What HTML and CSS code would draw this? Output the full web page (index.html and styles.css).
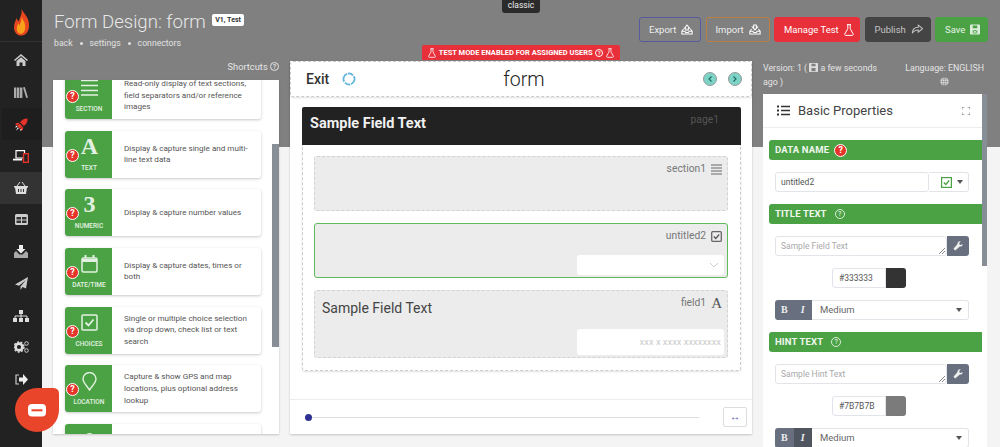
FILE: index.html
```html
<!DOCTYPE html>
<html lang="en">
<head>
<meta charset="utf-8">
<title>Form Design</title>
<link rel="stylesheet" href="styles.css">
</head>
<body>
<div class="app">
  <nav class="sidebar">
    <div class="logo">
      <svg width="15" height="28" viewBox="0 0 16 29"><path d="M8 0c1 3 3 5 5 8 2 3 3 6 3 10 0 6-3 11-8 11S0 25 0 20c0-4 2-7 3-10 0 2 1 3 2 4 1-4 4-8 3-14z" fill="#e8471f"/><path d="M8 9c1 3 4 6 4 11 0 4-2 7-5 7s-4-3-4-6c0-2 1-4 2-5 0 1 1 2 1 2 1-2 2-5 2-9z" fill="#f9a11b"/></svg>
    </div>
    <a class="nav-item"><svg width="14" height="12" viewBox="0 0 14 12"><path d="M7 0l7 6-1 1-6-5-6 5-1-1z" fill="#ccc"/><path d="M2.500 7L7 3.200 11.500 7v5H8.500V8.500h-3V12H2.500z" fill="#ccc"/></svg></a>
    <a class="nav-item"><svg width="14" height="11" viewBox="0 0 14 11"><path d="M0 .5h2.400V11H0zM3 .5h2.400V11H3zM6 .5h2.400V11H6zM9 .5l1.800-.500L14 10.500l-1.800.500z" fill="#aaa"/></svg></a>
    <a class="nav-item nav-dark"><svg width="13" height="13" viewBox="0 0 13 13"><path d="M12.500.5c.3 3-1 5.500-3.700 7.500L5 4.200C7 1.500 9.500.2 12.500.5z" fill="#e5332a"/><path d="M4.500 4.700L1.500 5 0 7h3zM8.300 8.500L8 11.500 6 13v-3z" fill="#e5332a"/><path d="M4.500 5.500L7.500 8.500 5 11 2 8z" fill="#e5332a"/><path d="M2.800 9.300l1 1L1 12.800z" fill="#fff"/><path d="M1.500 7.500L0 9.500l2.500-.5zM5.500 11l-.5 2 2-1.500z" fill="#fff"/></svg></a>
    <a class="nav-item"><svg width="16" height="13" viewBox="0 0 16 13"><path d="M3 .7h8.500V8H3z" fill="none" stroke="#fff" stroke-width="1.200"/><path d="M0 9.600h9" stroke="#fff" stroke-width="1.800"/><rect x="10.500" y="3.700" width="4.800" height="8.600" fill="#222" stroke="#e5332a" stroke-width="1.400"/></svg></a>
    <a class="nav-item nav-light"><svg width="14" height="12" viewBox="0 0 14 12"><path d="M3 4l3-4M11 4L8 0" stroke="#ddd" fill="none"/><path d="M0 4h14v1.500h-1L12 12H2L1 5.500H0z" fill="#ddd"/><path d="M4.500 7v3M7 7v3M9.500 7v3" stroke="#333"/></svg></a>
    <a class="nav-item"><svg width="13" height="11" viewBox="0 0 13 11"><path d="M0 1.500A1.500 1.500 0 0 1 1.500 0h10A1.500 1.500 0 0 1 13 1.500v8a1.500 1.500 0 0 1-1.500 1.500h-10A1.500 1.500 0 0 1 0 9.500z" fill="#ccc"/><path d="M1.500 3h4.500v2.500H1.500zM7 3h4.500v2.500H7zM1.500 6.500h4.500V9H1.500zM7 6.500h4.500V9H7z" fill="#333"/></svg></a>
    <a class="nav-item"><svg width="14" height="13" viewBox="0 0 14 13"><path d="M5 0h4v4h2.500L7 8.500 2.500 4H5z" fill="#eee"/><path d="M0 8l2-2 3.500 3.500h3L12 6l2 2v5H0z" fill="#aaa"/></svg></a>
    <a class="nav-item"><svg width="13" height="13" viewBox="0 0 13 13"><path d="M13 0L11 11.500 7.500 10 5.500 13V9.500L11 3 4 8.800 0 7.500z" fill="#ccc"/></svg></a>
    <a class="nav-item"><svg width="16" height="12" viewBox="0 0 16 12"><path d="M6 0h4v4H6zM0 8h4v4H0zM6 8h4v4H6zM12 8h4v4h-4z" fill="#ddd"/><path d="M8 4v2M2 8V6h12v2M8 6v2" stroke="#ddd" fill="none"/></svg></a>
    <a class="nav-item"><svg width="15" height="12" viewBox="0 0 15 12"><circle cx="5" cy="6" r="3.400" fill="none" stroke="#ddd" stroke-width="2.600"/><circle cx="5" cy="6" r="5" fill="none" stroke="#ddd" stroke-width="1.400" stroke-dasharray="2 1.500"/><circle cx="12.500" cy="2.500" r="1.800" fill="none" stroke="#ccc"/><circle cx="12.500" cy="9.500" r="1.800" fill="none" stroke="#ccc"/></svg></a>
    <a class="nav-item"><svg width="13" height="11" viewBox="0 0 13 11"><path d="M4 1H1v9h3" fill="none" stroke="#ccc" stroke-width="1.200"/><path d="M8 0l5 5.500L8 11V7.500H4v-4h4z" fill="#eee"/></svg></a>
  </nav>

  <main class="main">
    <header class="top">
      <div class="title-block">
        <h1 class="title">Form Design: form <span class="version-tag">V1, Test</span></h1>
        <p class="crumbs">back<i class="dot"></i>settings<i class="dot"></i>connectors</p>
      </div>
      <div class="actions">
        <button class="btn btn-export">Export <svg class="ico-tray" viewBox="0 0 14 12"><path d="M7 .8L10 4.500H8.500v2h-3v-2H4zM1 8l2-2.500M13 8l-2-2.500M1 8h3.500l1 1.500h3L9.500 8H13v3.200H1z" fill="none" stroke="#fff" stroke-width="1.200"/></svg></button>
        <button class="btn btn-import">Import <svg class="ico-tray" viewBox="0 0 14 12"><path d="M7 6.500L4 3h1.500V.8h3V3H10zM1 8l2-2.500M13 8l-2-2.500M1 8h3.500l1 1.500h3L9.500 8H13v3.200H1z" fill="none" stroke="#fff" stroke-width="1.200"/></svg></button>
        <button class="btn btn-test">Manage Test <svg class="ico-flask" viewBox="0 0 10 12"><path d="M3 .6h4M3.800.6v4L.8 10c-.3.700 0 1.400.8 1.400h6.800c.8 0 1.100-.7.800-1.400l-3-5.400v-4" fill="none" stroke="#fff"/></svg></button>
        <button class="btn btn-publish">Publish <svg class="ico-tray" viewBox="0 0 14 12"><path d="M8.500 1l5 4-5 4V6.500C5 6.500 3 7.500 1.500 10.500 1.500 6 4 3.500 8.500 3.500z" fill="none" stroke="#c4c4c4" stroke-width="1.200"/></svg></button>
        <button class="btn btn-save">Save <svg class="ico-save" viewBox="0 0 11 11"><rect width="11" height="11" rx="1" fill="#dceedb"/><path d="M3 1h5v3H3zM3 6h5v4H3z" fill="#4ba245"/><path d="M3.500 6.500l4 3M7.500 6.500l-4 3" stroke="#dceedb"/></svg></button>
      </div>
    </header>

    <div class="columns">
      <section class="col-left">
        <div class="shortcuts">Shortcuts <span class="help help-light">?</span></div>
        <div class="palette">
          <div class="cards">
            <div class="card">
              <div class="card-tile">
                <span class="tile-icon"><svg width="17" height="17" viewBox="0 0 17 17"><path d="M0 1.500h17M0 6.500h17M0 11.500h17M0 16h17" stroke="#e3f1e2" stroke-width="1.600"/></svg></span>
                <span class="tile-label">Section</span>
                <span class="badge">?</span>
              </div>
              <p class="card-text">Read-only display of text sections, field separators and/or reference images</p>
            </div>
            <div class="card">
              <div class="card-tile">
                <span class="tile-icon tile-glyph">A</span>
                <span class="tile-label">Text</span>
                <span class="badge">?</span>
              </div>
              <p class="card-text">Display &amp; capture single and multi-line text data</p>
            </div>
            <div class="card">
              <div class="card-tile">
                <span class="tile-icon tile-glyph tile-bold">3</span>
                <span class="tile-label">Numeric</span>
                <span class="badge">?</span>
              </div>
              <p class="card-text">Display &amp; capture number values</p>
            </div>
            <div class="card">
              <div class="card-tile">
                <span class="tile-icon"><svg width="17" height="18" viewBox="0 0 17 18"><rect x="1" y="3" width="15" height="14" rx="1.500" fill="none" stroke="#e3f1e2" stroke-width="1.500"/><path d="M1 5.500h15" stroke="#e3f1e2" stroke-width="3"/><path d="M4.500 0v3M12.500 0v3" stroke="#e3f1e2" stroke-width="2"/></svg></span>
                <span class="tile-label">Date/Time</span>
                <span class="badge">?</span>
              </div>
              <p class="card-text">Display &amp; capture dates, times or both</p>
            </div>
            <div class="card">
              <div class="card-tile">
                <span class="tile-icon"><svg width="17" height="17" viewBox="0 0 17 17"><rect x="1" y="1" width="15" height="15" rx="1" fill="none" stroke="#e3f1e2" stroke-width="1.500"/><path d="M4.500 8.500l3 3 5-6" fill="none" stroke="#e3f1e2" stroke-width="1.800"/></svg></span>
                <span class="tile-label">Choices</span>
                <span class="badge">?</span>
              </div>
              <p class="card-text">Single or multiple choice selection via drop down, check list or text search</p>
            </div>
            <div class="card">
              <div class="card-tile">
                <span class="tile-icon"><svg width="15" height="19" viewBox="0 0 15 19"><path d="M7.500 18C4.500 13.500 1 10.500 1 7a6.500 6.500 0 0 1 13 0c0 3.500-3.500 6.500-6.500 11z" fill="none" stroke="#e3f1e2" stroke-width="1.400"/></svg></span>
                <span class="tile-label">Location</span>
                <span class="badge">?</span>
              </div>
              <p class="card-text">Capture &amp; show GPS and map locations, plus optional address lookup</p>
            </div>
            <div class="card">
              <div class="card-tile">
                <span class="tile-icon"><svg width="15" height="19" viewBox="0 0 15 19"><circle cx="7.500" cy="7" r="5" fill="#e3f1e2"/></svg></span>
              </div>
              <p class="card-text"></p>
            </div>
          </div>
          <span class="thumb thumb-left"></span>
        </div>
      </section>

      <section class="col-center">
        <div class="test-banner"><svg class="ico-flask-sm" viewBox="0 0 10 12"><path d="M3 .6h4M3.800.6v4L.8 10c-.3.700 0 1.400.8 1.400h6.800c.8 0 1.100-.7.800-1.400l-3-5.400v-4" fill="none" stroke="#fff"/></svg> TEST MODE ENABLED FOR ASSIGNED USERS <span class="help help-banner">?</span> <svg class="ico-flask-sm" viewBox="0 0 10 12"><path d="M3 .6h4M3.800.6v4L.8 10c-.3.700 0 1.400.8 1.400h6.800c.8 0 1.100-.7.800-1.400l-3-5.400v-4" fill="none" stroke="#fff"/></svg></div>
        <div class="designer">
          <div class="designer-bar">
            <div class="bar-left">
              <span class="exit">Exit</span>
              <svg width="14" height="14" viewBox="0 0 14 14"><path d="M2.200 9.800A5.500 5.500 0 0 1 5 1.900M11.800 4.200A5.500 5.500 0 0 1 9 12.100M5.800 1.600A5.500 5.500 0 0 1 11 3.300M8.200 12.400A5.500 5.500 0 0 1 3 10.700" fill="none" stroke="#62b5dd" stroke-width="1.800"/></svg>
            </div>
            <div class="form-name">form</div>
            <div class="bar-right">
              <span class="nav-round"><svg width="4" height="6" viewBox="0 0 4 6"><path d="M3.500.5L1 3l2.500 2.500" fill="none" stroke="#1f6f63" stroke-width="1.200"/></svg></span>
              <span class="nav-round"><svg width="4" height="6" viewBox="0 0 4 6"><path d="M.5.500L3 3 .5 5.500" fill="none" stroke="#1f6f63" stroke-width="1.200"/></svg></span>
            </div>
          </div>
          <div class="canvas">
            <div class="page">
              <div class="page-head">
                <span class="page-title">Sample Field Text</span>
                <span class="page-id">page1</span>
              </div>
              <div class="page-body">
                <div class="field field-section">
                  <div class="field-meta">section1 <svg width="11" height="11" viewBox="0 0 11 11"><path d="M0 1h11M0 4h11M0 7h11M0 10h11" stroke="#666" stroke-width="1.200"/></svg></div>
                </div>
                <div class="field field-selected">
                  <div class="field-meta">untitled2 <svg width="11" height="11" viewBox="0 0 11 11"><rect x=".7" y=".7" width="9.600" height="9.600" rx="1" fill="none" stroke="#666" stroke-width="1.300"/><path d="M2.800 5.500l2 2 3.400-4" fill="none" stroke="#555" stroke-width="1.300"/></svg></div>
                  <div class="fake-select"><svg width="10" height="6" viewBox="0 0 10 6"><path d="M1 1l4 4 4-4" fill="none" stroke="#ccc"/></svg></div>
                </div>
                <div class="field field-text">
                  <div class="field-row">
                    <span class="field-title">Sample Field Text</span>
                    <div class="field-meta">field1 <span class="meta-a">A</span></div>
                  </div>
                  <div class="fake-input">xxx x xxxx xxxxxxxx</div>
                </div>
              </div>
            </div>
          </div>
          <div class="zoom-bar">
            <div class="slider"><span class="knob"></span></div>
            <button class="fit-btn">↔</button>
          </div>
        </div>
      </section>

      <section class="col-right">
        <div class="meta-row">
          <div class="meta-version">Version: 1 ( <svg class="ico-meta" viewBox="0 0 11 11"><rect width="11" height="11" rx="1" fill="#ddd"/><path d="M3 1h5v3H3zM3 6h5v4H3z" fill="#808080"/></svg> a few seconds ago )</div>
          <div class="meta-lang">Language: ENGLISH<br><svg class="ico-meta" viewBox="0 0 11 11"><circle cx="5.500" cy="5.500" r="5" fill="#ddd"/><path d="M0 5.500h11M5.500 0v11M1.500 2.500h8M1.500 8.500h8" stroke="#808080" stroke-width=".6"/><ellipse cx="5.500" cy="5.500" rx="2.500" ry="5" fill="none" stroke="#808080" stroke-width=".6"/></svg></div>
        </div>
        <div class="props">
          <div class="props-head">
            <svg width="13" height="11" viewBox="0 0 13 11"><path d="M4 1.500h9M4 5.500h9M4 9.500h9" stroke="#333" stroke-width="1.300"/><path d="M0 .5h2v2H0zM0 4.500h2v2H0zM0 8.500h2v2H0z" fill="#333"/></svg>
            <span class="props-title">Basic Properties</span>
            <svg class="ico-expand" width="8" height="8" viewBox="0 0 8 8"><path d="M0 2.500V0h2.500M5.500 0H8v2.500M8 5.500V8H5.500M2.500 8H0V5.500" fill="none" stroke="#777"/></svg>
          </div>
          <div class="group-bar">Data Name <span class="badge badge-inline">?</span></div>
          <div class="input-group">
            <div class="text-input grow">untitled2</div>
            <div class="addon">
              <svg width="11" height="11" viewBox="0 0 11 11"><rect x=".6" y=".6" width="9.800" height="9.800" fill="none" stroke="#4ba245" stroke-width="1.200"/><path d="M2.800 5.500l2 2 3.400-4" fill="none" stroke="#4ba245" stroke-width="1.300"/></svg>
              <i class="caret"></i>
            </div>
          </div>
          <div class="group-bar">Title Text <span class="help help-light">?</span></div>
          <div class="input-group">
            <div class="text-input grow muted">Sample Field Text<span class="resize"></span></div>
            <button class="wrench"><svg width="10" height="10" viewBox="0 0 11 11"><path d="M10.500 3.200L8.500 4.500 7 3.500V2L8.500.5C6.500 0 4.800 1.200 5 3.200L.5 8.500l2 2L7.500 6c2 .4 3.400-1 3-2.800z" fill="#eee"/></svg></button>
          </div>
          <div class="color-row">
            <div class="color-value">#333333</div>
            <div class="swatch swatch-dark"></div>
          </div>
          <div class="style-row">
            <div class="style-btns"><span class="sb sb-b">B</span><span class="sb sb-i">I</span></div>
            <div class="style-select">Medium<i class="caret"></i></div>
          </div>
          <div class="group-bar">Hint Text <span class="help help-light">?</span></div>
          <div class="input-group">
            <div class="text-input grow muted">Sample Hint Text<span class="resize"></span></div>
            <button class="wrench"><svg width="10" height="10" viewBox="0 0 11 11"><path d="M10.500 3.200L8.500 4.500 7 3.500V2L8.500.5C6.500 0 4.800 1.200 5 3.200L.5 8.500l2 2L7.500 6c2 .4 3.400-1 3-2.800z" fill="#eee"/></svg></button>
          </div>
          <div class="color-row">
            <div class="color-value">#7B7B7B</div>
            <div class="swatch swatch-gray"></div>
          </div>
          <div class="style-row">
            <div class="style-btns"><span class="sb sb-b">B</span><span class="sb sb-i sb-on">I</span></div>
            <div class="style-select">Medium<i class="caret"></i></div>
          </div>
          <span class="thumb thumb-right"></span>
        </div>
      </section>
    </div>
  </main>
</div>

<div class="mode-tag">classic</div>
<div class="chat"><svg width="18" height="13" viewBox="0 0 18 13"><rect width="18" height="12.500" rx="4" fill="#fff"/><rect x="3.500" y="5.300" width="11" height="2" fill="#e8452b"/></svg></div>
</body>
</html>
```

FILE: styles.css
```css
* { box-sizing: border-box; }
html, body { margin: 0; height: 447px; overflow: hidden; }
body { font-family: Roboto, "Liberation Sans", sans-serif; color: #444; background: #f4f4f4; position: relative; }
p, h1 { margin: 0; }

.app { display: flex; height: 447px; }

/* sidebar */
.sidebar { width: 42px; flex: none; background: #222; display: flex; flex-direction: column; align-items: stretch; }
.logo { height: 41.500px; flex: none; margin-bottom: 3px; display: flex; align-items: center; justify-content: center; border-bottom: 1px solid #333; padding-top: 4px; }
.nav-item { height: 31.900px; flex: none; display: flex; align-items: center; justify-content: center; }
.nav-dark { background: #1e1e1e; margin-left: 2px; padding-right: 2px; }
.nav-light { background: #333; }

/* main */
.main { flex: 1; min-width: 0; padding: 0 12px 0 11px; background: linear-gradient(#808080 147px, #f4f4f4 147px); }
.top { height: 45px; display: flex; justify-content: space-between; }
.title-block { padding: 10px 0 0 1px; color: #e6e6e6; }
.title { font-size: 18.600px; font-weight: 300; line-height: 25px; white-space: nowrap; color: #e8e8e8; }
.version-tag { display: inline-block; vertical-align: 6px; margin-left: 2px; background: #fff; color: #333; font-size: 7px; font-weight: 700; line-height: 12px; padding: 0 3px; border-radius: 2px; }
.crumbs { font-size: 8.700px; line-height: 14px; padding-top: 1px; color: #e0e0e0; white-space: nowrap; }
.dot { display: inline-block; width: 3px; height: 3px; background: #e0e0e0; border-radius: 50%; margin: 0 7px; vertical-align: 1px; }

.actions { display: flex; gap: 4.500px; padding-top: 17px; align-items: flex-start; }
.btn { height: 25px; font: 400 9.500px Roboto, sans-serif; color: #eee; background: transparent; border: 1px solid transparent; border-radius: 3px; padding: 0 9px; display: flex; align-items: center; gap: 5px; white-space: nowrap; }
.btn-export { width: 62px; border-color: #565ba0; }
.btn-import { width: 64px; border-color: #bb7f42; }
.btn-test { width: 86px; background: #e8303a; color: #fff; border-color: #e8303a; }
.btn-publish { width: 66px; background: #444; color: #c4c4c4; border-color: #444; }
.btn-save { width: 53px; background: #4ba245; border-color: #4ba245; color: #e8f3e7; }
.ico-tray { width: 12px; height: 11px; flex: none; }
.ico-flask { width: 10px; height: 12px; flex: none; }
.ico-save { width: 10px; height: 11px; flex: none; }

.columns { display: grid; grid-template-columns: 226px 461px 225px; column-gap: 11px; }
.col-center { margin-right: -1px; }
.col-right { margin-left: 1px; padding-top: 16px; }

/* left */
.col-left { padding-top: 16px; }
.shortcuts { height: 19px; font-size: 9.300px; line-height: 12px; color: #e4e4e4; text-align: right; }
.help { display: inline-block; width: 9px; height: 9px; border-radius: 50%; font-size: 7px; font-weight: 500; line-height: 8px; text-align: center; vertical-align: 1px; }
.help-light { border: 1px solid #e4e4e4; color: #e4e4e4; }
.palette { position: relative; height: 354px; background: #fff; overflow: hidden; box-shadow: 0 1px 2px rgba(0,0,0,.2); padding: 0 18px 0 12px; }
.cards { display: flex; flex-direction: column; gap: 11.670px; margin-top: -8px; }
.card { height: 47px; flex: none; display: flex; background: #fff; border-radius: 3px; box-shadow: 0 1px 3px rgba(0,0,0,.22); }
.card-tile { position: relative; width: 47px; flex: none; background: #4ba245; border-radius: 3px 0 0 3px; color: #e3f1e2; display: flex; flex-direction: column; align-items: center; }
.tile-icon { height: 32px; padding-top: 7px; display: flex; align-items: flex-start; justify-content: center; padding-left: 1px; }
.tile-glyph { font: 700 24px/19px "Liberation Serif", serif; padding-top: 6px; padding-left: 2px; }
.tile-bold { font-weight: 700; }
.tile-label { font-size: 6.500px; font-weight: 500; line-height: 9px; text-transform: uppercase; white-space: nowrap; padding-top: 1px; padding-left: 1px; }
.badge { position: absolute; left: 1px; top: 18px; width: 13px; height: 13px; background: #e5352a; border: 1px solid #fff; border-radius: 50%; color: #fff; font-size: 9px; font-weight: 700; line-height: 11px; text-align: center; }
.card-text { padding: 0 8px 0 12px; align-self: center; font-size: 8.100px; line-height: 11.600px; color: #555; flex: 1; }
.thumb { position: absolute; background: #888e96; }
.thumb-left { right: 0; top: 64px; width: 7px; height: 203px; }

/* center */
.test-banner { width: 198px; height: 15px; margin: 0 auto 1px; background: #e8303a; border-radius: 2px 2px 0 0; color: #fff; font-size: 7.500px; font-weight: 700; line-height: 15px; display: flex; justify-content: center; align-items: center; gap: 2.500px; white-space: nowrap; }
.ico-flask-sm { width: 8px; height: 10px; flex: none; }
.help-banner { border: 1px solid #fff; width: 8px; height: 8px; font-size: 6px; line-height: 6px; }
.designer { background: #fff; height: 373px; display: flex; flex-direction: column; box-shadow: 0 1px 2px rgba(0,0,0,.2); }
.designer-bar { height: 36px; flex: none; border: 1px dashed #ccc; border-radius: 3px; display: grid; grid-template-columns: 1fr auto 1fr; align-items: center; padding: 0 9px 0 15px; box-shadow: 0 1px 2px rgba(0,0,0,.12); }
.bar-left { display: flex; align-items: center; gap: 13px; }
.exit { font-size: 14px; font-weight: 500; color: #333; }
.form-name { font-size: 19.500px; font-weight: 300; color: #222; }
.bar-right { display: flex; justify-content: flex-end; gap: 11px; }
.nav-round { width: 14px; height: 14px; flex: none; border-radius: 50%; border: 1.500px solid #999; background: #7dd3c6; display: flex; align-items: center; justify-content: center; }

.canvas { flex: 1; padding: 10px 11px 0 12px; }
.page { height: 264px; }
.page-head { height: 38px; background: #222; border-radius: 2px 2px 0 0; padding: 0 22px 0 8px; display: flex; justify-content: space-between; }
.page-title { font-size: 14.500px; font-weight: 700; color: #f0f0f0; line-height: 33px; }
.page-id { font-size: 10.300px; color: #555; line-height: 25px; }
.page-body { height: 226px; border: 1px dashed #ccc; border-top: 0; border-radius: 0 0 3px 3px; padding: 11px 12px 0 11px; display: flex; flex-direction: column; gap: 12px; box-shadow: 0 1px 2px rgba(0,0,0,.12); }
.field { background: #ececec; border: 1px dashed #d2d2d2; border-radius: 3px; position: relative; display: flex; flex-direction: column; align-items: flex-end; padding: 5px 4px 0 7px; }
.field-section { height: 55px; }
.field-selected { height: 55px; border: 1px solid #5fbb59; }
.field-text { height: 68px; }
.field-meta { font-size: 10.300px; color: #777; line-height: 14px; display: flex; align-items: center; gap: 5px; padding-right: 1px; white-space: nowrap; }
.meta-a { font: 400 15px/14px "Liberation Serif", serif; color: #555; }
.fake-select { width: 147px; height: 20px; background: #fff; border-radius: 3px; margin-top: 12px; margin-right: -1px; display: flex; align-items: center; justify-content: flex-end; padding-right: 5px; }
.field-row { width: 100%; display: flex; justify-content: space-between; align-items: flex-start; }
.field-title { font-size: 14px; color: #444; line-height: 24px; }
.fake-input { width: 147px; height: 26px; background: #fff; border-radius: 3px; margin-top: 9px; margin-right: -1px; font-size: 9.400px; color: #ccc; line-height: 26px; text-align: right; padding-right: 3px; white-space: nowrap; }

.zoom-bar { height: 35px; flex: none; border-top: 1px solid #eee; display: flex; align-items: center; padding: 0 5px 0 15px; gap: 24px; }
.slider { flex: 1; height: 1px; background: #ddd; position: relative; }
.knob { position: absolute; left: 0; top: -3px; width: 7px; height: 7px; border-radius: 50%; background: #2f3192; }
.fit-btn { width: 24px; height: 20px; padding: 0; background: #fff; border: 1px solid #ddd; border-radius: 2px; color: #2f3192; font-size: 10px; line-height: 16px; }

/* right */
.meta-row { height: 33px; display: flex; justify-content: space-between; font-size: 8.800px; line-height: 14px; color: #e4e4e4; }
.meta-version { width: 118px; }
.meta-lang { text-align: center; white-space: nowrap; padding-right: 3px; }
.ico-meta { width: 9px; height: 9px; vertical-align: -1px; }
.props { position: relative; background: #fff; height: 360px; padding-right: 5px; overflow: hidden; }
.thumb-right { right: 0; top: 0; width: 5px; height: 172px; }
.props-head { height: 34px; border-bottom: 1px solid #eee; display: flex; align-items: center; padding: 0 12px 0 14px; gap: 8px; }
.props-title { flex: 1; font-size: 13px; color: #444; }
.group-bar { height: 20px; margin: 12px 0 12px 6px; background: #4ba245; border-radius: 3px 0 0 3px; color: #f0f7ef; font-size: 9.500px; font-weight: 700; line-height: 20px; text-transform: uppercase; padding-left: 6px; letter-spacing: .15px; display: flex; align-items: center; gap: 5px; }
.badge-inline { position: static; display: block; flex: none; }
.group-bar .help-light { margin-left: 3px; width: 10px; height: 10px; border-color: #dcedda; color: #dcedda; text-transform: none; }
.input-group { display: flex; height: 20px; margin: 0 13px 0 12px; }
.text-input { position: relative; border: 1px solid #e2e4ea; border-radius: 3px; font-size: 8.500px; line-height: 18px; padding-left: 5px; color: #555; background: #fff; }
.grow { flex: 1; }
.muted { color: #aaa; }
.resize { position: absolute; right: 1px; bottom: 1px; width: 6px; height: 6px; background: linear-gradient(135deg, transparent 45%, #888 45%, #888 55%, transparent 55%, transparent 70%, #888 70%, #888 80%, transparent 80%); }
.addon { width: 40px; border: 1px solid #e2e4ea; border-left: 0; border-radius: 0 3px 3px 0; display: flex; align-items: center; gap: 5px; padding-left: 12px; }
.caret { display: block; width: 0; height: 0; border-left: 3px solid transparent; border-right: 3px solid transparent; border-top: 4px solid #555; }
.wrench { width: 22px; padding: 0; border: 0; background: #687080; border-radius: 0 3px 3px 0; display: flex; align-items: center; justify-content: center; }
.color-row { display: flex; width: 74px; height: 20px; margin: 12px 0 0 69px; }
.color-value { flex: 1; border: 1px solid #e2e4ea; border-radius: 3px 0 0 3px; font-size: 8.500px; line-height: 18px; padding-left: 6px; color: #555; }
.swatch { width: 20px; border-radius: 0 3px 3px 0; }
.swatch-dark { background: #333; }
.swatch-gray { background: #7b7b7b; }
.style-row { display: flex; height: 20px; margin: 12px 13px 0 12px; }
.style-btns { width: 37px; flex: none; display: flex; background: #687080; border-radius: 3px 0 0 3px; }
.sb { flex: 1; color: #eee; font: 700 10px/20px "Liberation Serif", serif; text-align: center; }
.sb-i { font-style: italic; }
.sb-on { background: #50565f; }
.style-select { flex: 1; border: 1px solid #e2e4ea; border-left: 0; border-radius: 0 3px 3px 0; font-size: 9.500px; color: #666; line-height: 18px; padding: 0 6px 0 8px; display: flex; justify-content: space-between; align-items: center; }

/* overlays */
.mode-tag { position: absolute; left: 502px; top: 0; width: 38px; height: 13px; background: #2b2b2b; border-radius: 0 0 3px 3px; color: #eee; font-size: 8.500px; line-height: 10px; text-align: center; }
.chat { position: absolute; left: 15px; top: 388px; width: 44px; height: 44px; background: #e8452b; border-radius: 50% 12% 50% 50%; display: flex; align-items: center; justify-content: center; }
```
